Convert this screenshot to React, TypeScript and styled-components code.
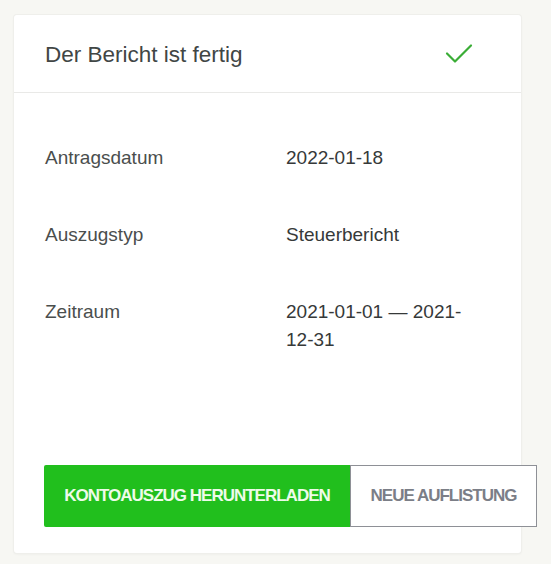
import React from 'react';
import styled, { createGlobalStyle } from 'styled-components';

const GlobalStyle = createGlobalStyle`
  html, body {
    margin: 0;
    padding: 0;
    background: #f7f7f3;
    font-family: "Liberation Sans", Arial, sans-serif;
  }
`;

const Page = styled.div`
  padding: 15px 0 0 14px;
  min-height: 564px;
  box-sizing: border-box;
`;

const Card = styled.div`
  width: 507px;
  background: #ffffff;
  border-radius: 3px;
  box-shadow: 0 0 0 1px #efefeb, 0 1px 3px rgba(0, 0, 0, 0.06);
  display: flex;
  flex-direction: column;
`;

const Header = styled.div`
  height: 78px;
  padding: 0 48px 0 31px;
  display: flex;
  align-items: center;
  justify-content: space-between;
  border-bottom: 1px solid #e9e9e7;
  box-sizing: border-box;
`;

const Title = styled.h2`
  margin: 3px 0 0;
  font-size: 22.5px;
  font-weight: 400;
  color: #414645;
`;

const Body = styled.dl`
  margin: 0;
  padding: 51px 30px 0 31px;
  display: flex;
  flex-direction: column;
  gap: 49px;
`;

const Row = styled.div`
  display: grid;
  grid-template-columns: 241px 1fr;
  font-size: 19px;
  line-height: 28px;
`;

const Label = styled.dt`
  color: #4a4e4d;
`;

const Value = styled.dd`
  margin: 0;
  color: #363939;
  padding-right: 10px;
`;

const Footer = styled.div`
  padding: 111px 0 26px 30px;
  display: flex;
`;

const Button = styled.button<{ $primary?: boolean }>`
  flex-shrink: 0;
  height: 62px;
  box-sizing: border-box;
  font-family: "Liberation Sans", Arial, sans-serif;
  font-size: 17px;
  font-weight: 700;
  letter-spacing: -1px;
  text-transform: uppercase;
  cursor: pointer;
  border-radius: ${p => (p.$primary ? '2px 0 0 2px' : '0')};
  border: ${p => (p.$primary ? 'none' : '1px solid #8e9096')};
  background: ${p => (p.$primary ? '#21bf1d' : '#ffffff')};
  color: ${p => (p.$primary ? '#eefbe9' : '#7b7e87')};
  width: ${p => (p.$primary ? '306px' : '187px')};
  padding: 0;
`;

const rows = [
  { label: 'Antragsdatum', value: '2022-01-18' },
  { label: 'Auszugstyp', value: 'Steuerbericht' },
  { label: 'Zeitraum', value: '2021-01-01 — 2021-12-31' },
];

const CheckIcon = () => (
  <svg width="28" height="22" viewBox="0 0 28 22">
    <polyline
      points="2,10.5 10,18.5 26,2.5"
      fill="none"
      stroke="#3aad36"
      strokeWidth="2.2"
      strokeLinecap="round"
      strokeLinejoin="round"
    />
  </svg>
);

export default function App() {
  return (
    <>
      <GlobalStyle />
      <Page>
        <Card>
          <Header>
            <Title>Der Bericht ist fertig</Title>
            <CheckIcon />
          </Header>
          <Body>
            {rows.map(r => (
              <Row key={r.label}>
                <Label>{r.label}</Label>
                <Value>{r.value}</Value>
              </Row>
            ))}
          </Body>
          <Footer>
            <Button $primary>Kontoauszug herunterladen</Button>
            <Button>Neue Auflistung</Button>
          </Footer>
        </Card>
      </Page>
    </>
  );
}
